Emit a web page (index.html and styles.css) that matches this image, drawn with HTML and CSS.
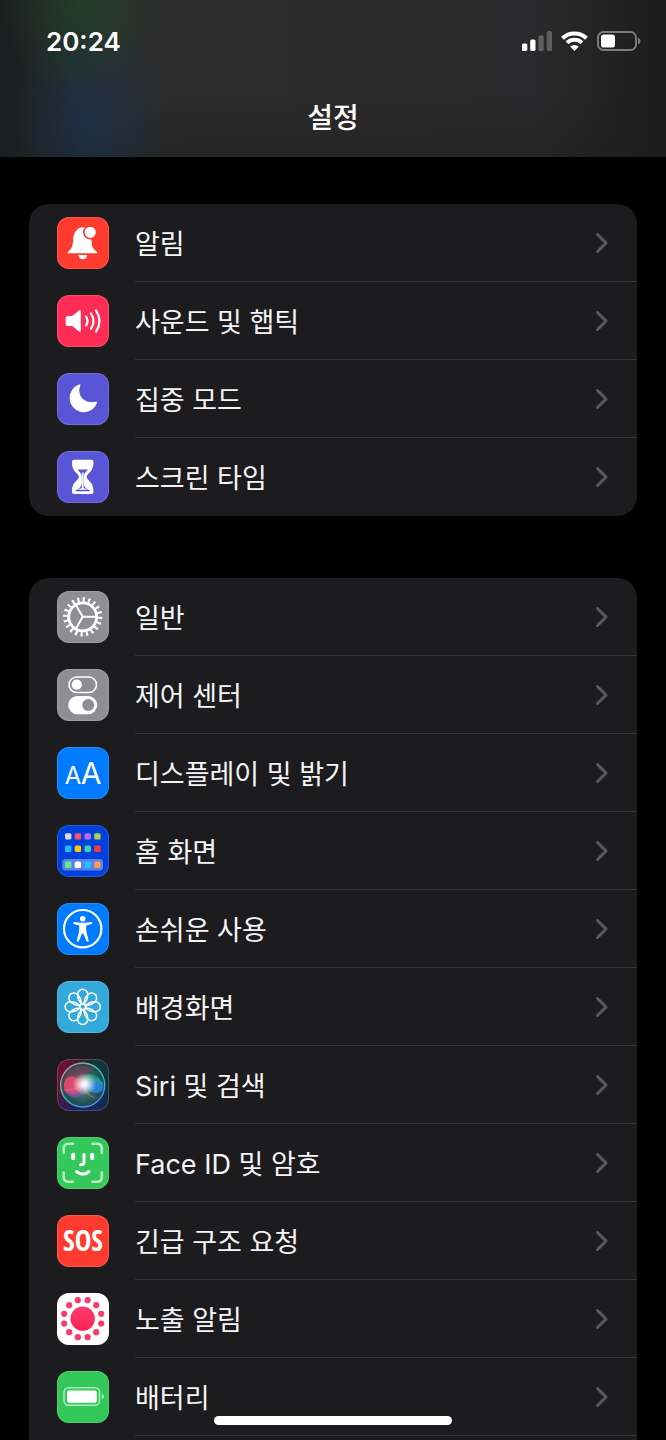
FILE: index.html
```html
<!DOCTYPE html>
<html lang="ko">
<head>
<meta charset="utf-8">
<meta name="viewport" content="width=device-width, initial-scale=1">
<title>설정</title>
<link rel="stylesheet" href="styles.css">
</head>
<body>
<svg class="defs" aria-hidden="true">
  <symbol id="chevron" viewBox="0 0 14 22"><path d="M2.500 2.500 11 11l-8.500 8.500" fill="none" stroke="currentColor" stroke-width="3" stroke-linecap="round" stroke-linejoin="round"/></symbol>
</svg>
<div class="screen">
  <header class="header">
    <div class="status">
      <time class="clock">20:24</time>
      <div class="indicators">
        <svg width="30" height="20" viewBox="0 0 30 20" role="img" aria-label="신호 세기"><g fill="#fff"><rect x="0" y="12.500" width="5.300" height="7.500" rx="1.500"/><rect x="8.200" y="8.500" width="5.300" height="11.500" rx="1.500"/><g opacity=".25"><rect x="16.400" y="4.500" width="5.300" height="15.500" rx="1.500"/><rect x="24.700" y="0" width="5.300" height="20" rx="1.500"/></g></g></svg>
        <svg width="27" height="20" viewBox="0 0 27 20" role="img" aria-label="Wi-Fi"><g fill="none" stroke="#fff" stroke-width="4"><path d="M1.500 7.300a17.200 17.200 0 0 1 24 0"/><path d="M6 11.800a11 11 0 0 1 15 0"/></g><path d="M9.200 15.600a6.400 6.400 0 0 1 8.600 0l-4.300 4.400z" fill="#fff"/></svg>
        <svg width="44" height="20" viewBox="0 0 44 20" role="img" aria-label="배터리"><rect x="1" y="1" width="38" height="18" rx="5.500" fill="none" stroke="#7b7b7d" stroke-width="2"/><path d="M41 6.500q2.600 1 2.600 3.500t-2.600 3.500z" fill="#7b7b7d"/><rect x="4" y="3.500" width="14" height="13" rx="2.500" fill="#fff"/></svg>
      </div>
    </div>
    <h1 class="title">설정</h1>
  </header>

  <main class="content">
    <ul class="group">
      <li><a class="row" href="#notifications"><svg class="icon red" viewBox="0 0 52 52"><path d="M26 10.200c1.300 0 2.200.2 2.900.5a7 7 0 0 0 5.600 11.500c.3 8 .8 8.500 5 12.400q1.700 1.700-.3 1.700H12q-2.500 0-.6-1.800c4.500-4.200 4.200-6 4.900-13.500.5-5.500 3.700-10.500 9.700-10.800zM21.300 38h9q-1 4.300-4.500 4.300T21.300 38z" fill="#fff"/><circle cx="33.200" cy="15.300" r="6.400" fill="#fff" stroke="#ff3b30" stroke-width="1.600"/></svg><span class="label">알림</span><svg class="chevron"><use href="#chevron"/></svg></a></li>
      <li><a class="row" href="#sounds"><svg class="icon pink" viewBox="0 0 52 52"><path d="M10.500 21h4.700l6.800-5.600q1.800-1.200 1.800.8v19.600q0 2-1.800.8L15.200 31h-4.700q-1.800 0-1.800-1.800v-6.400q0-1.800 1.800-1.800z" fill="#fff"/><path d="M29 21.500q3 4.700 0 9.200M34 18.500q5 7.700 0 15.200M39 15.500q7 10.700 0 21.200" fill="none" stroke="#fff" stroke-width="2.200" stroke-linecap="round"/></svg><span class="label">사운드 및 햅틱</span><svg class="chevron"><use href="#chevron"/></svg></a></li>
      <li><a class="row" href="#focus"><svg class="icon indigo" viewBox="0 0 52 52"><path d="M22 11.600c1-.4 1.900 0 1.400 1C19.500 21.500 26.500 31.500 38.700 28.700c1.200-.3 1.800.4 1.300 1.400C37.500 36 32.500 39.200 27 39.200c-8 0-14.300-6.300-14.300-14.200 0-6.200 4-11.400 9.300-13.400z" fill="#fff"/></svg><span class="label">집중 모드</span><svg class="chevron"><use href="#chevron"/></svg></a></li>
      <li><a class="row" href="#screen-time"><svg class="icon indigo" viewBox="0 0 52 52"><path d="M17 8.700h17.500q2 0 2 2.300c0 7.500-2.500 9-5.800 12.500q-2 2.300 0 4.800c3.300 3.500 5.800 5 5.800 12.500q0 2.300-2 2.300H17q-2 0-2-2.300c0-7.500 2.500-9 5.800-12.500q2-2.300 0-4.800C17.500 20 15 18.500 15 11q0-2.300 2-2.300z" fill="#fff"/><path d="M20.500 18.500h10.500q-4.200 4-4.300 7.300v5.500c.1 4.700 1.800 6 6.300 8.200v.8H18.500v-.8c4.500-2.200 6.200-3.500 6.300-8.200v-5.500q-.1-3.300-4.300-7.300z" fill="#5856d6"/><path d="M25.750 21.500v15.500" stroke="#fff" stroke-width="1.600"/><path d="M20.500 38.800q4.500-1.500 5.250-3 .7 1.500 5.250 3z" fill="#fff"/></svg><span class="label">스크린 타임</span><svg class="chevron"><use href="#chevron"/></svg></a></li>
    </ul>

    <ul class="group group-open">
      <li><a class="row" href="#general"><svg class="icon gray" viewBox="0 0 52 52"><g fill="none" stroke="#fff"><circle cx="25.700" cy="25.800" r="17.200" stroke-width="4.800" pathLength="200" stroke-dasharray="4 6"/><circle cx="25.700" cy="25.800" r="14" stroke-width="2.800"/><path d="M25.700 25.800H39M25.700 25.800l-6.700-11.600M25.700 25.800l-6.700 11.600" stroke-width="2"/></g></svg><span class="label">일반</span><svg class="chevron"><use href="#chevron"/></svg></a></li>
      <li><a class="row" href="#control-center"><svg class="icon gray" viewBox="0 0 52 52"><rect x="12" y="8" width="27.500" height="15.500" rx="7.750" fill="none" stroke="#fff" stroke-width="1.600"/><circle cx="19.800" cy="15.700" r="5.100" fill="#fff"/><rect x="11.200" y="27" width="29" height="18.200" rx="9.100" fill="#fff"/><circle cx="31.200" cy="36.100" r="6" fill="#8e8e93"/></svg><span class="label">제어 센터</span><svg class="chevron"><use href="#chevron"/></svg></a></li>
      <li><a class="row" href="#display"><svg class="icon blue" viewBox="0 0 52 52" aria-hidden="true"><g fill="#fff" class="aa"><text x="16" y="37" font-size="24">A</text><text x="34" y="37" font-size="30">A</text></g></svg><span class="label">디스플레이 및 밝기</span><svg class="chevron"><use href="#chevron"/></svg></a></li>
      <li><a class="row" href="#home-screen"><svg class="icon navy" viewBox="0 0 52 52"><rect x="5.300" y="34" width="40.700" height="11.500" rx="3" fill="#5b82ec"/><g><rect x="8" y="8.200" width="6.400" height="6.400" rx="1.500" fill="#d8dbe8"/><rect x="17.700" y="8.200" width="6.400" height="6.400" rx="1.500" fill="#ff5068"/><rect x="27.500" y="8.200" width="6.400" height="6.400" rx="1.500" fill="#b66cff"/><rect x="37.200" y="8.200" width="6.400" height="6.400" rx="1.500" fill="#a8d549"/><rect x="8" y="20.500" width="6.400" height="6.400" rx="1.500" fill="#22b8ff"/><rect x="17.700" y="20.500" width="6.400" height="6.400" rx="1.500" fill="#ffc30f"/><rect x="27.500" y="20.500" width="6.400" height="6.400" rx="1.500" fill="#35d6b0"/><rect x="37.200" y="20.500" width="6.400" height="6.400" rx="1.500" fill="#ff3737"/><rect x="8" y="36.600" width="6.400" height="6.400" rx="1.500" fill="#5df07d"/><rect x="17.700" y="36.600" width="6.400" height="6.400" rx="1.500" fill="#fff"/><rect x="27.500" y="36.600" width="6.400" height="6.400" rx="1.500" fill="#20c5ff"/><rect x="37.200" y="36.600" width="6.400" height="6.400" rx="1.500" fill="#ff9d48"/></g></svg><span class="label">홈 화면</span><svg class="chevron"><use href="#chevron"/></svg></a></li>
      <li><a class="row" href="#accessibility"><svg class="icon blue" viewBox="0 0 52 52"><circle cx="25.700" cy="25.700" r="18.700" fill="none" stroke="#fff" stroke-width="2.200"/><circle cx="25.700" cy="15.800" r="2.800" fill="#fff"/><path d="M17 19l6.500.8h4.500l6.500-.8q1.700.9.300 2l-5.500 1.400q-.5 4 .3 7l2.200 8.500q-.8 1.400-2.200.3L26.300 30.500h-1.200l-3.300 7.700q-1.400 1.100-2.200-.3l2.200-8.500q.8-3 .3-7l-5.500-1.400q-1-1.100.4-2z" fill="#fff"/></svg><span class="label">손쉬운 사용</span><svg class="chevron"><use href="#chevron"/></svg></a></li>
      <li><a class="row" href="#wallpaper"><svg class="icon cyan" viewBox="0 0 52 52"><g fill="none" stroke="#fff" stroke-width="1.500"><g id="petals"><path id="petal" d="M25.700 23.200C20.500 20 20.700 15 20.700 13.200a5 5 0 0 1 10 0C30.700 15 30.900 20 25.700 23.200z"/><use href="#petal" transform="rotate(90 25.700 25.800)"/><use href="#petal" transform="rotate(180 25.700 25.800)"/><use href="#petal" transform="rotate(270 25.700 25.800)"/></g><use href="#petals" transform="rotate(45 25.700 25.800)"/><circle cx="25.700" cy="25.800" r="3"/></g></svg><span class="label">배경화면</span><svg class="chevron"><use href="#chevron"/></svg></a></li>
      <li><a class="row" href="#siri"><svg class="icon siri" viewBox="0 0 52 52"><defs><linearGradient id="siri-bg" x1="0" y1="0" x2="1" y2="0.200"><stop offset="0" stop-color="#7c0d35"/><stop offset=".45" stop-color="#3a1c32"/><stop offset=".75" stop-color="#0e3a3f"/><stop offset="1" stop-color="#12303b"/></linearGradient><linearGradient id="siri-low" x1="0" y1="0" x2="0" y2="1"><stop offset=".6" stop-color="#14205e" stop-opacity="0"/><stop offset="1" stop-color="#1c2270" stop-opacity=".7"/></linearGradient><linearGradient id="siri-ring" x1="0" y1="0" x2=".6" y2="1"><stop offset="0" stop-color="#ff7590"/><stop offset=".4" stop-color="#52c9a0"/><stop offset=".7" stop-color="#2fbcd0"/><stop offset="1" stop-color="#5687ff"/></linearGradient><radialGradient id="siri-orb"><stop offset="0" stop-color="#8eaaaa"/><stop offset=".5" stop-color="#3b6866"/><stop offset="1" stop-color="#174a50"/></radialGradient><radialGradient id="siri-glow"><stop offset="0" stop-color="#fff"/><stop offset=".25" stop-color="#fff" stop-opacity=".85"/><stop offset="1" stop-color="#fff" stop-opacity="0"/></radialGradient></defs><rect width="52" height="52" rx="12" fill="url(#siri-bg)"/><rect width="52" height="52" rx="12" fill="url(#siri-low)"/><circle cx="25.700" cy="26" r="21.800" fill="url(#siri-orb)"/><path d="M5 22C9 8 25 3 38 10q-12 5-12 16L7 35q-3-5-2-13z" fill="#a02c50" opacity=".45"/><path d="M7 25c1-8 9-12 18-1 5 6-2 12-9 12S6.500 31 7 25z" fill="#ec4a73" opacity=".85"/><path d="M10 32q9 7 17-6 0 17-15 11z" fill="#7c58b7" opacity=".7"/><path d="M26 27q15-13 20-3c2 13-10 12-20 3z" fill="#2587dd" opacity=".9"/><path d="M27 23q3-13 15-4l3 7q-10-8-18-3z" fill="#27a782" opacity=".7"/><path d="M26 27q3 9 12 12M7 31q12 0 20-5" fill="none" stroke="#f5819e" stroke-width=".8" opacity=".7"/><circle cx="25.700" cy="26" r="22" fill="none" stroke="url(#siri-ring)" stroke-width="1.400"/><ellipse cx="27.500" cy="25" rx="12" ry="11" fill="url(#siri-glow)"/><rect x=".5" y=".5" width="51" height="51" rx="11.500" fill="none" stroke="#fff" stroke-opacity=".18"/></svg><span class="label"><span class="latin">Siri</span> 및 검색</span><svg class="chevron"><use href="#chevron"/></svg></a></li>
      <li><a class="row" href="#face-id"><svg class="icon green" viewBox="0 0 52 52"><g fill="none" stroke="#fff" stroke-linecap="round"><path d="M6.700 16v-4.500q0-4.800 4.800-4.800H16M35.500 6.700H40q4.800 0 4.800 4.800V16M44.800 35.500V40q0 4.800-4.800 4.800h-4.500M16 44.800h-4.500q-4.800 0-4.800-4.800v-4.500" stroke-width="2.600" opacity=".65"/><path d="M16.200 17.800v3.500M35.200 17.800v3.500" stroke-width="4"/><path d="M27 17.500v7.800q0 2.500-3.500 2.500M19.500 34.500q6.300 5.300 12.500 0" stroke-width="3"/></g></svg><span class="label"><span class="latin">Face ID</span> 및 암호</span><svg class="chevron"><use href="#chevron"/></svg></a></li>
      <li><a class="row" href="#sos"><svg class="icon red" viewBox="0 0 52 52" aria-hidden="true"><text class="sos" x="26" y="36">SOS</text></svg><span class="label">긴급 구조 요청</span><svg class="chevron"><use href="#chevron"/></svg></a></li>
      <li><a class="row" href="#exposure"><svg class="icon white" viewBox="0 0 52 52"><defs><linearGradient id="rose" x1="0" y1="0" x2="0" y2="1"><stop offset="0" stop-color="#ff3a70"/><stop offset="1" stop-color="#f92352"/></linearGradient></defs><circle cx="25.700" cy="25.700" r="12.200" fill="url(#rose)"/><g fill="#f83a6c"><g id="dots"><circle cx="20.800" cy="7.200" r="3.100"/><circle cx="30.600" cy="7.200" r="3.100"/><circle cx="39.200" cy="12.200" r="3.100"/><circle cx="44.200" cy="20.800" r="3.100"/><circle cx="12.200" cy="12.200" r="3.100"/><circle cx="7.200" cy="20.800" r="3.100"/></g><use href="#dots" transform="rotate(180 25.700 25.700)"/></g></svg><span class="label">노출 알림</span><svg class="chevron"><use href="#chevron"/></svg></a></li>
      <li><a class="row" href="#battery"><svg class="icon green" viewBox="0 0 52 52"><rect x="7" y="16.700" width="35.500" height="17.600" rx="4.500" fill="none" stroke="#fff" stroke-opacity=".6" stroke-width="1.500"/><rect x="10" y="19.500" width="29.800" height="12.200" rx="2" fill="#fff"/><path d="M44.800 22.500q2.200.8 2.200 3t-2.200 3z" fill="#fff" opacity=".6"/></svg><span class="label">배터리</span><svg class="chevron"><use href="#chevron"/></svg></a></li>
    </ul>
  </main>
  <div class="home-indicator"></div>
</div>
</body>
</html>
```
FILE: styles.css
```css
* {
  box-sizing: border-box;
}

body {
  margin: 0;
  background: #000;
  color: #fff;
  font-family: "Noto Sans CJK KR", sans-serif;
}

.defs {
  display: none;
}

.screen {
  position: relative;
  display: flex;
  flex-direction: column;
  height: 100vh;
  overflow: hidden;
}

.header {
  flex: none;
  padding-bottom: 7px;
  background:
    radial-gradient(ellipse 80px 100px at 80px 0, rgba(30, 76, 42, 0.6), transparent),
    radial-gradient(ellipse 80px 110px at 88px 124px, rgba(24, 54, 88, 0.6), transparent),
    linear-gradient(to bottom, transparent 60%, rgba(30, 30, 31, 0.5)),
    linear-gradient(to right, #1c1e1f, #2c2c2d 18%, #2a2a2c 80%, #1c1c1d);
}

.status {
  display: flex;
  align-items: center;
  justify-content: space-between;
  height: 82px;
  padding: 0 25px 0 46px;
}

.clock {
  font-family: Inter, sans-serif;
  font-size: 26px;
  font-weight: 600;
}

.indicators {
  display: flex;
  align-items: center;
  gap: 9px;
}

.title {
  margin: 0;
  font-size: 28px;
  font-weight: 500;
  line-height: 68px;
  text-align: center;
}

.content {
  display: flex;
  flex: 1;
  flex-direction: column;
  gap: 62px;
  padding: 47px 29px 0;
}

.group {
  flex: none;
  margin: 0;
  padding: 0;
  border-radius: 20px;
  background: #1c1c1e;
  list-style: none;
}

.group-open {
  flex: 1 0 auto;
  border-radius: 20px 20px 0 0;
}

.row {
  position: relative;
  display: flex;
  align-items: center;
  gap: 26px;
  height: 78px;
  padding: 0 28px;
  color: #f5f5f7;
  text-decoration: none;
}

.row::after {
  position: absolute;
  right: 0;
  bottom: 0;
  left: 106px;
  height: 1px;
  background: #343437;
  content: "";
}

.group:not(.group-open) li:last-child .row::after {
  display: none;
}

.label {
  flex: 1;
  font-size: 27px;
  line-height: 40px;
  font-weight: 400;
}

.latin {
  font-family: Inter, sans-serif;
  line-height: 1;
}

.icon {
  flex: none;
  width: 52px;
  height: 52px;
  border-radius: 12px;
  box-shadow: inset 0 0 0 1px rgba(255, 255, 255, 0.15);
}

.chevron {
  flex: none;
  width: 14px;
  height: 22px;
  color: #5a5a5e;
}

.red { background: #ff3b30; }
.pink { background: #ff2d55; }
.indigo { background: #5856d6; }
.gray { background: #8e8e93; }
.blue { background: #007aff; }
.navy { background: #0040dd; }
.cyan { background: #34aadc; }
.green { background: #34c759; }
.white { background: #fff; }

.aa {
  font-family: Inter, sans-serif;
  text-anchor: middle;
}

.sos {
  fill: #fff;
  font-family: "Liberation Sans Narrow", "Open Sans Condensed", "Roboto Condensed", "Noto Sans", sans-serif;
  font-size: 28px;
  font-weight: 700;
  text-anchor: middle;
}

.home-indicator {
  position: absolute;
  bottom: 15px;
  left: 50%;
  width: 238px;
  height: 9px;
  border-radius: 5px;
  background: #fff;
  transform: translateX(-50%);
}
```
